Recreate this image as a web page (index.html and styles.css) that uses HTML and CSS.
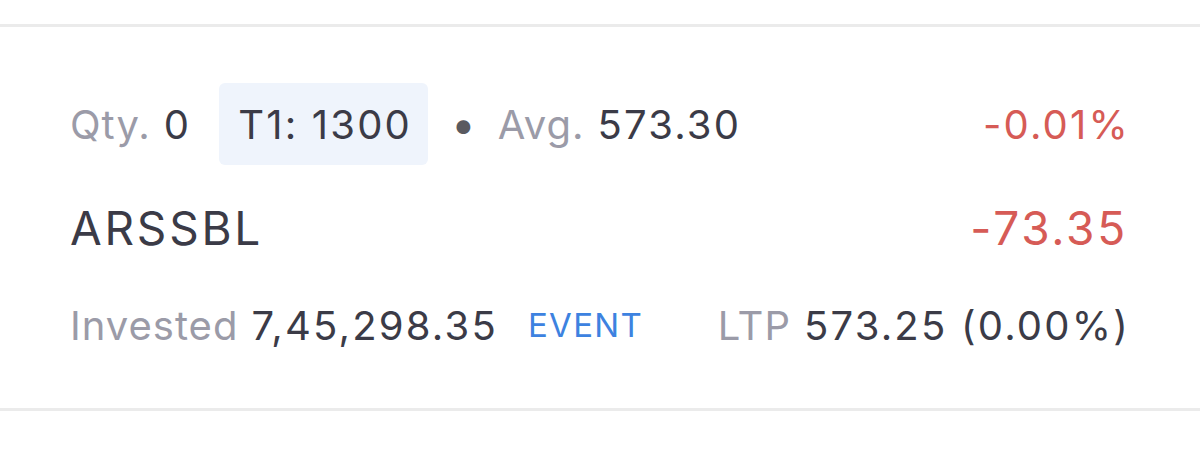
FILE: index.html
```html
<!DOCTYPE html>
<html>
<head>
<meta charset="utf-8">
<link rel="stylesheet" href="styles.css">
</head>
<body>
<div class="card">
  <div class="row row-top">
    <div class="left">
      <span class="label">Qty.</span>
      <span class="value">0</span>
      <span class="badge">T1: 1300</span>
      <span class="dot">•</span>
      <span class="label">Avg.</span>
      <span class="value">573.30</span>
    </div>
    <div class="right neg">-0.01%</div>
  </div>
  <div class="row row-mid">
    <div class="symbol">ARSSBL</div>
    <div class="pnl neg">-73.35</div>
  </div>
  <div class="row row-bot">
    <div class="left">
      <span class="label">Invested</span>
      <span class="value">7,45,298.35</span>
      <span class="event">EVENT</span>
    </div>
    <div class="right">
      <span class="label">LTP</span>
      <span class="value">573.25 (0.00%)</span>
    </div>
  </div>
</div>
</body>
</html>
```

FILE: styles.css
```css
html, body {
  margin: 0;
  padding: 0;
  background: #ffffff;
}

body {
  font-family: Inter, "Noto Sans", sans-serif;
  font-size: 40px;
  letter-spacing: 0.055em;
  color: #3b3b47;
}

.card {
  margin-top: 24px;
  border-top: 3px solid #ebebeb;
  border-bottom: 3px solid #ebebeb;
  padding: 56px 72px 58px 70px;
}

.row {
  display: flex;
  justify-content: space-between;
  align-items: center;
}

.row-top {
  height: 82px;
}

.row-mid {
  height: 50px;
  margin-top: 38px;
}

.row-bot {
  height: 50px;
  margin-top: 47px;
}

.left, .right {
  display: flex;
  align-items: center;
  white-space: pre;
}

.right {
  margin-right: -2px;
}

.label {
  color: #9b9ba8;
  letter-spacing: 0.025em;
}

.value {
  color: #3b3b47;
  margin-left: 13px;
}

.badge {
  background: #eff4fc;
  border-radius: 6px;
  height: 82px;
  display: flex;
  align-items: center;
  padding: 0 16px 0 19px;
  margin-left: 28px;
  color: #3b3b47;
}

.dot {
  color: #5a5a60;
  margin: 0 22px 0 23px;
  font-size: 44px;
  letter-spacing: 0;
}

.neg {
  color: #d65b56;
}

.symbol, .pnl {
  font-size: 46px;
  letter-spacing: 0.06em;
}

.event {
  color: #3d82e0;
  font-size: 33px;
  letter-spacing: 0.04em;
  margin-left: 30px;
}
```
